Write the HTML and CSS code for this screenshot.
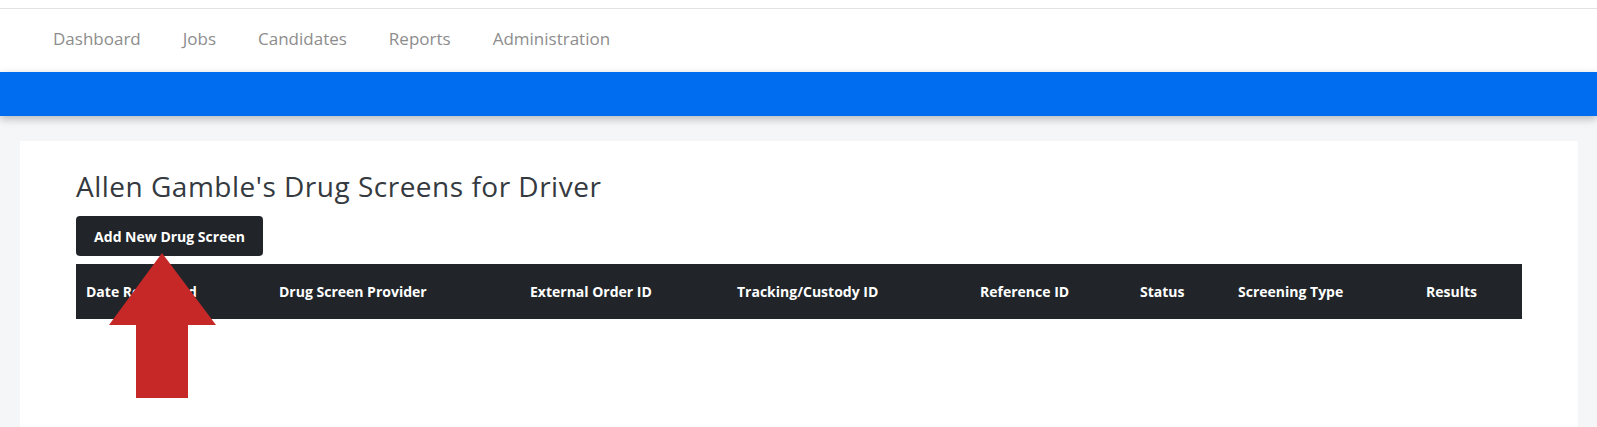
FILE: index.html
```html
<!DOCTYPE html>
<html>
<head>
<meta charset="utf-8">
<link rel="stylesheet" href="styles.css">
</head>
<body>
<div class="topstrip"></div>
<nav class="nav">
  <a class="nav-item">Dashboard</a>
  <a class="nav-item">Jobs</a>
  <a class="nav-item">Candidates</a>
  <a class="nav-item">Reports</a>
  <a class="nav-item">Administration</a>
</nav>
<div class="bluebar"></div>
<main class="page">
  <section class="card">
    <h1 class="title">Allen Gamble's Drug Screens for Driver</h1>
    <button class="btn">Add New Drug Screen</button>
    <table class="grid">
      <colgroup>
        <col class="c1"><col class="c2"><col class="c3"><col class="c4"><col class="c5"><col class="c6"><col class="c7"><col class="c8">
      </colgroup>
      <thead>
        <tr>
          <th>Date Requested</th>
          <th>Drug Screen Provider</th>
          <th>External Order ID</th>
          <th>Tracking/Custody ID</th>
          <th>Reference ID</th>
          <th>Status</th>
          <th>Screening Type</th>
          <th>Results</th>
        </tr>
      </thead>
    </table>
    <svg class="arrow" width="110" height="146" viewBox="0 0 110 146">
      <polygon points="53,0 107,72 79,72 79,145 27,145 27,72 0,72" fill="#c62828"/>
    </svg>
  </section>
</main>
</body>
</html>
```
FILE: styles.css
```css
* { box-sizing: border-box; }
html, body { margin: 0; padding: 0; }
body {
  background: #f5f6f8;
  font-family: "Open Sans", "Liberation Sans", sans-serif;
  height: 427px;
  overflow: hidden;
}
.topstrip {
  background: #fff;
  border-bottom: 1px solid #e2e2e2;
  height: 9px;
}
.nav {
  background: #fff;
  height: 63px;
  display: flex;
  align-items: center;
  padding-left: 53px;
  padding-bottom: 4px;
  gap: 42px;
}
.nav-item {
  color: #8d8d8d;
  font-size: 17px;
}
.bluebar {
  height: 44px;
  background: #006df0;
  box-shadow: 0 3px 8px rgba(0, 0, 0, 0.25);
  position: relative;
}
.page {
  padding: 25px 19px 0 20px;
}
.card {
  position: relative;
  background: #fff;
  padding: 27px 56px 0 56px;
  height: 300px;
}
.title {
  margin: 0;
  font-weight: 400;
  font-size: 28px;
  letter-spacing: 0.5px;
  line-height: 36px;
  color: #343a40;
}
.btn {
  margin-top: 12px;
  display: block;
  height: 40px;
  width: 187px;
  background: #212529;
  color: #fff;
  border: none;
  border-radius: 4px;
  font-family: inherit;
  font-weight: 700;
  font-size: 14px;
  padding: 0;
}
.grid {
  margin-top: 8px;
  width: 100%;
  border-collapse: collapse;
  table-layout: fixed;
}
.grid th {
  background: #212529;
  color: #fff;
  font-weight: 700;
  font-size: 14px;
  text-align: left;
  height: 55px;
  padding: 0 0 0 10px;
  white-space: nowrap;
}
.c1 { width: 193px; }
.c2 { width: 251px; }
.c3 { width: 207px; }
.c4 { width: 243px; }
.c5 { width: 160px; }
.c6 { width: 98px; }
.c7 { width: 188px; }
.c8 { width: auto; }
.arrow {
  position: absolute;
  left: 89px;
  top: 112px;
}
```
